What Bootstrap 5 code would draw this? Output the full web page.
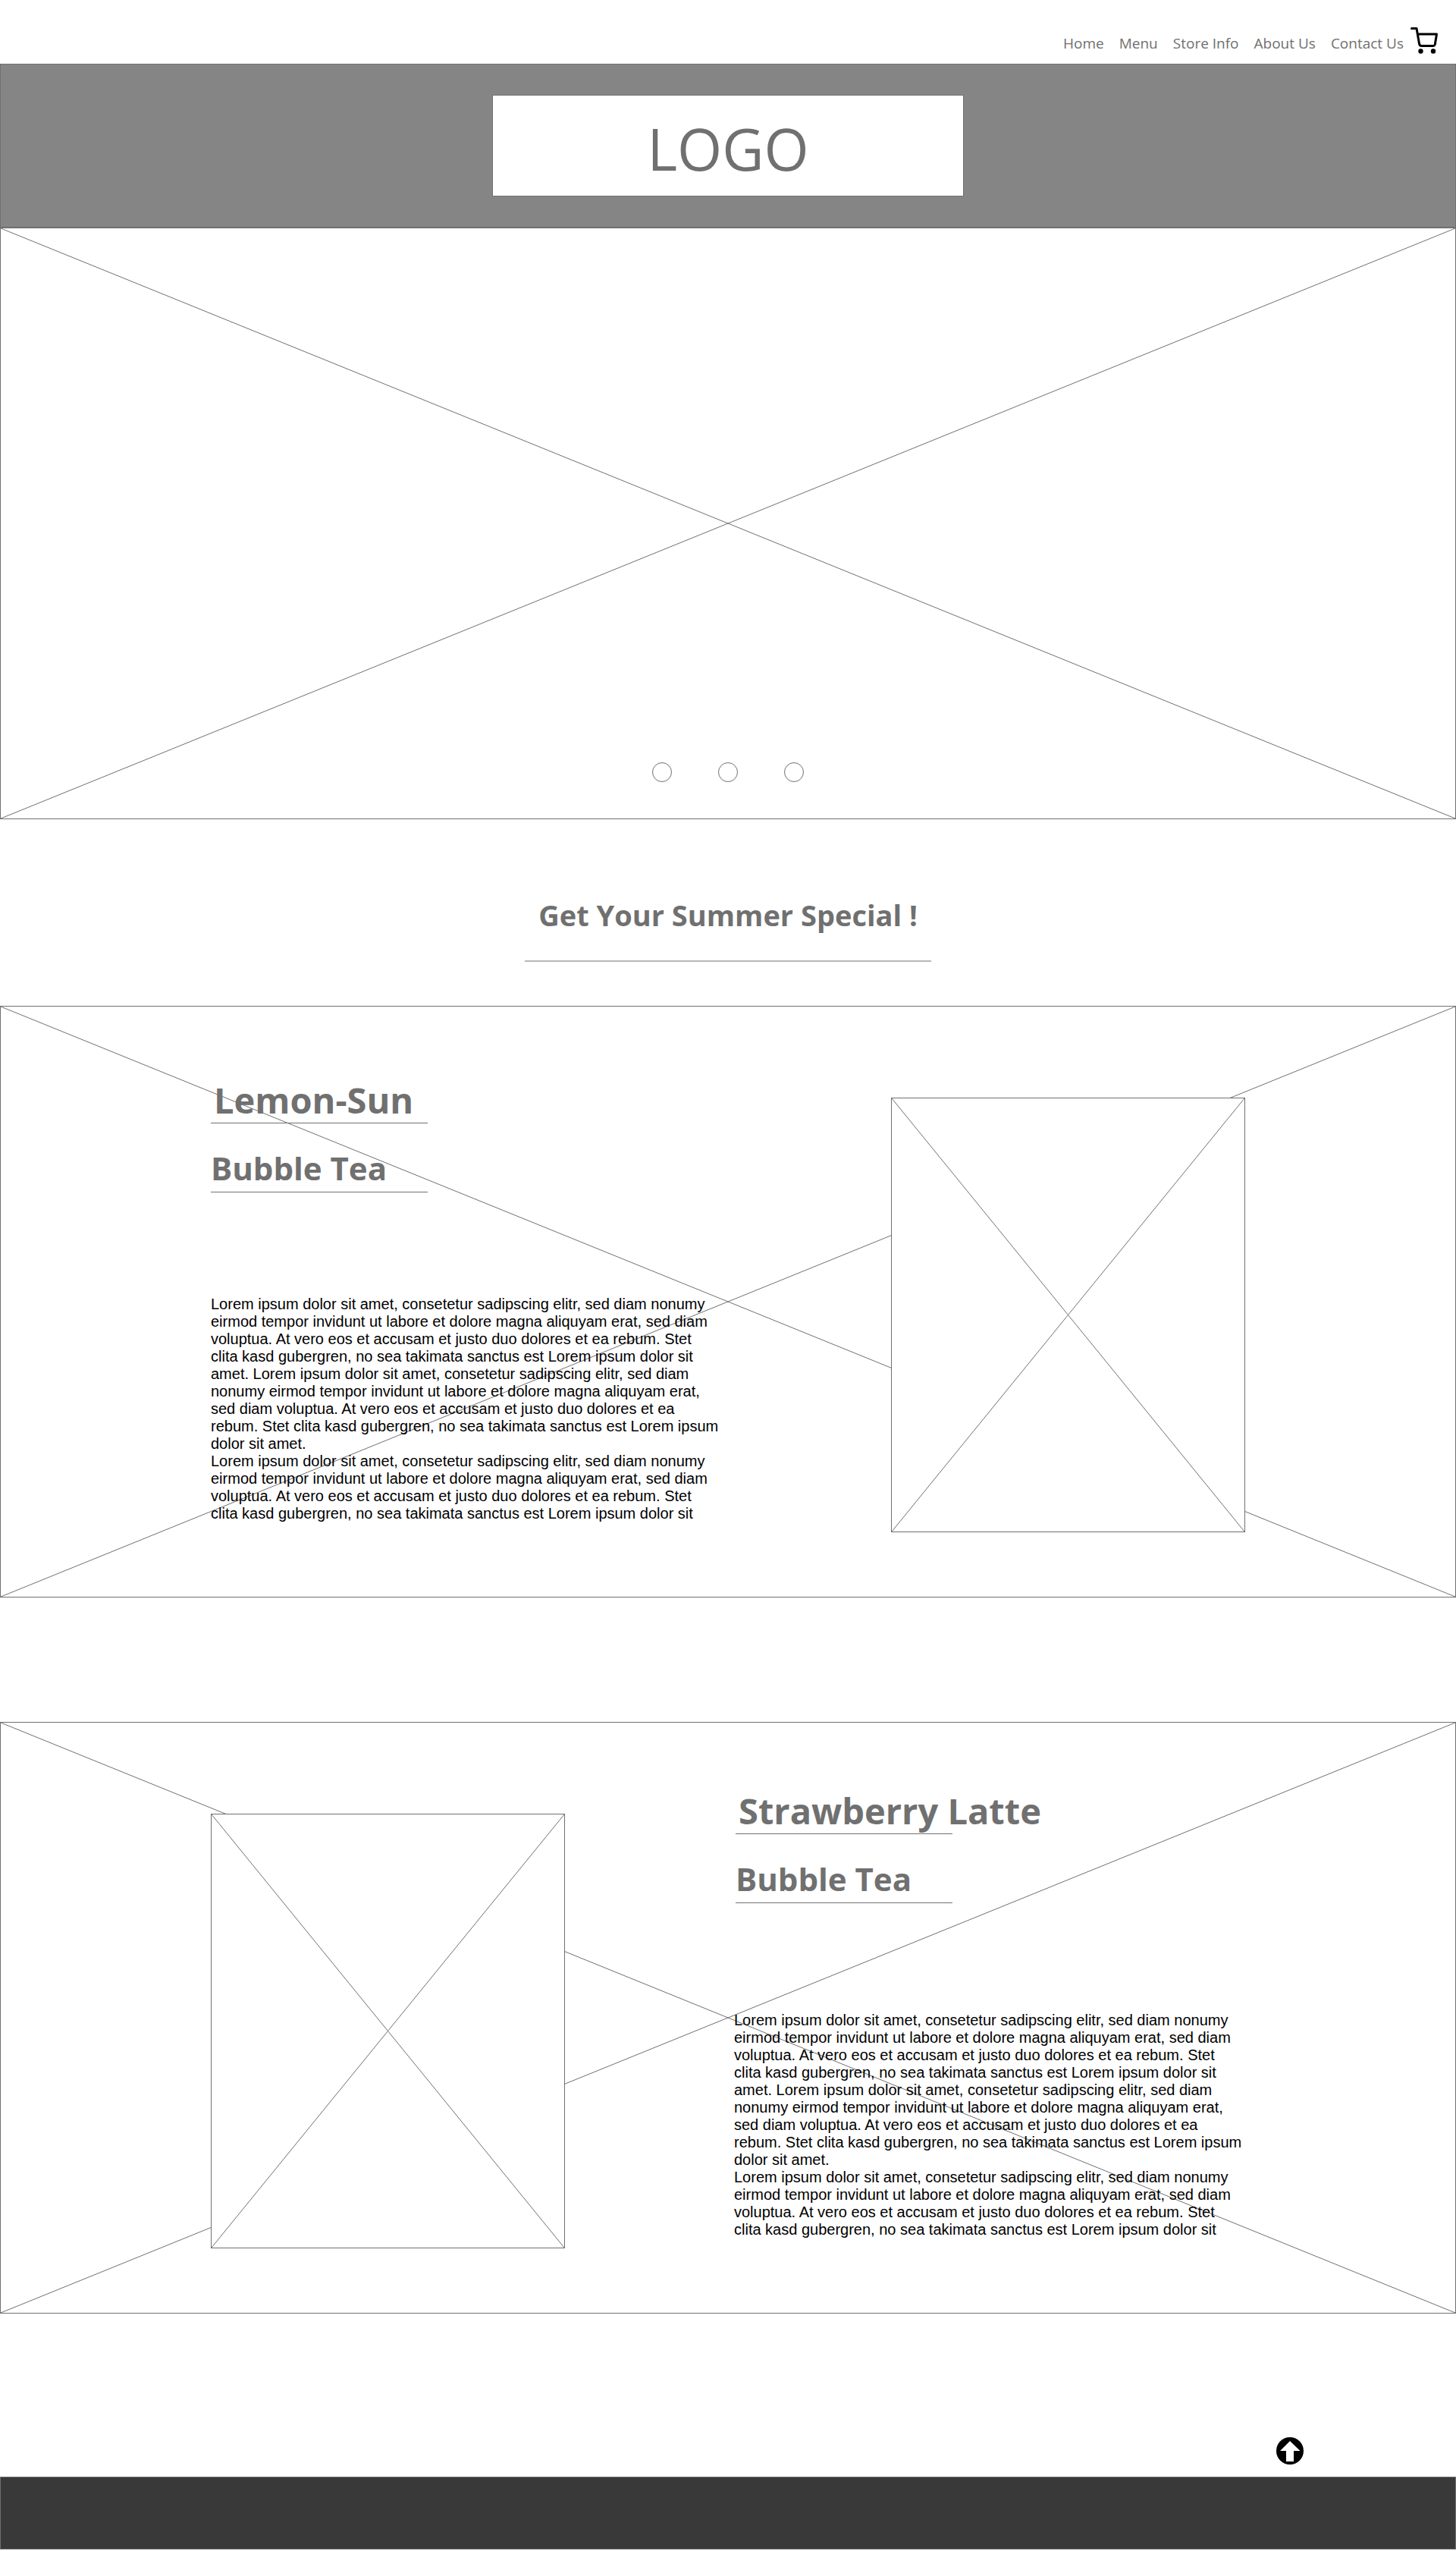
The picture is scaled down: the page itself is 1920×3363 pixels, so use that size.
<!DOCTYPE html>
<html lang="en">
<head>
<meta charset="utf-8">
<meta name="viewport" content="width=device-width, initial-scale=1">
<title>Bubble Tea Shop</title>
<link href="https://cdn.jsdelivr.net/npm/bootstrap@5.3.0/dist/css/bootstrap.min.css" rel="stylesheet">
<style>
  :root { --line: #707070; }
  body { font-family: "Open Sans", "Noto Sans", sans-serif; color: var(--line); background: #fff; }
  .topbar { height: 84px; padding: 20px 23px 0 0; }
  .topbar .nav-link { color: var(--line); font-size: 19px; line-height: 28px; padding: 0; }
  .topbar .navbar-nav { gap: 20px; padding-top: 23px; }
  .cart-link svg, .to-top svg { display: block; }
  .banner { background: #858585; border: 1px solid var(--line); padding: 40px 16px; }
  .logo-box { width: 100%; max-width: 622px; height: 134px; border: 1px solid var(--line); background: #fff; font-size: 76px; line-height: 132px; padding-top: 4px; }
  .placeholder-box { position: relative; border: 1px solid var(--line); background: #fff; }
  .cross { position: absolute; inset: 0; width: 100%; height: 100%; stroke: var(--line); stroke-width: 1; pointer-events: none; }
  .cross line { vector-effect: non-scaling-stroke; }
  .hero { height: 780px; padding-bottom: 48px; }
  .dots { gap: 61px; position: relative; }
  .dot { width: 26px; height: 26px; border: 1px solid var(--line); border-radius: 50%; background: #fff; padding: 0; }
  .special { padding: 100px 16px 58px; }
  .special h1 { font-size: 38px; line-height: 52px; font-weight: 700; margin: 0; padding-bottom: 34px; border-bottom: 2px solid #b7b7b7; width: 536px; max-width: 100%; }
  .feature { padding: 120px 16px 85px; }
  .feature-inner { position: relative; max-width: 1364px; }
  .feature-photo { width: 467px; height: 573px; max-width: 100%; }
  .feature-copy { width: 674px; max-width: 100%; }
  .feature h2, .feature h3 { width: 286px; max-width: 100%; margin: 0; font-weight: 700; border-bottom: 1px solid var(--line); white-space: nowrap; }
  .feature h2 { font-size: 47px; line-height: 64px; height: 63px; margin-top: -29px; padding-left: 4px; }
  .feature h3 { font-size: 42px; line-height: 60px; height: 91px; padding-top: 29px; }
  .feature-text { font-family: "Liberation Sans", Arial, sans-serif; font-size: 20px; line-height: 23px; color: #000; padding-top: 136px; }
  .feature-text p { margin: 0; }
  .feature-gap { height: 164px; }
  .raised h2 { margin-top: -36px; }
  .raised h2, .raised h3 { margin-left: 2px; }
  .raised .feature-text { padding-top: 143px; }
  .page-end { padding: 163px 201px 16px 16px; }
  .site-footer { height: 96px; margin-bottom: 2px; background: #393939; border: 1px solid var(--line); }
</style>
<script src="https://cdn.jsdelivr.net/npm/bootstrap@5.3.0/dist/js/bootstrap.bundle.min.js"></script>
</head>
<body>
<nav class="topbar d-flex justify-content-end align-items-start" aria-label="Main">
  <ul class="navbar-nav flex-row">
    <li><a class="nav-link" href="#">Home</a></li>
    <li><a class="nav-link" href="#">Menu</a></li>
    <li><a class="nav-link" href="#">Store Info</a></li>
    <li><a class="nav-link" href="#">About Us</a></li>
    <li><a class="nav-link" href="#">Contact Us</a></li>
  </ul>
  <a class="cart-link ms-2 pt-3" href="#" aria-label="Cart">
    <svg width="38" height="36" viewBox="0 0 38 36" fill="none" stroke="#000" stroke-width="3" stroke-linecap="round" stroke-linejoin="round"><path d="M2.500 1.500H9L12.500 21.500Q13 24.500 15.500 24.500H30.500Q32.800 24.500 33.300 22.500L35.500 9H10.500"/><circle cx="14.500" cy="31.500" r="3.200" fill="#000" stroke="none"/><circle cx="31" cy="31.500" r="3.200" fill="#000" stroke="none"/></svg>
  </a>
</nav>

<header class="banner d-flex justify-content-center">
  <div class="logo-box d-flex justify-content-center">LOGO</div>
</header>

<main>
  <section class="placeholder-box hero d-flex justify-content-center align-items-end" aria-label="Slideshow">
    <svg class="cross" viewBox="0 0 100 100" preserveAspectRatio="none" aria-hidden="true"><line x1="0" y1="0" x2="100" y2="100"/><line x1="0" y1="100" x2="100" y2="0"/></svg>
    <div class="dots d-flex">
      <button class="dot" type="button" aria-label="Slide 1"></button>
      <button class="dot" type="button" aria-label="Slide 2"></button>
      <button class="dot" type="button" aria-label="Slide 3"></button>
    </div>
  </section>

  <div class="special d-flex justify-content-center">
    <h1 class="text-center text-nowrap">Get Your Summer Special !</h1>
  </div>

  <section class="placeholder-box feature">
    <svg class="cross" viewBox="0 0 100 100" preserveAspectRatio="none" aria-hidden="true"><line x1="0" y1="0" x2="100" y2="100"/><line x1="0" y1="100" x2="100" y2="0"/></svg>
    <div class="feature-inner mx-auto d-flex flex-wrap justify-content-between">
      <div class="feature-copy">
        <h2>Lemon-Sun</h2>
        <h3>Bubble Tea</h3>
        <div class="feature-text">
          <p>Lorem ipsum dolor sit amet, consetetur sadipscing elitr, sed diam nonumy eirmod tempor invidunt ut labore et dolore magna aliquyam erat, sed diam voluptua. At vero eos et accusam et justo duo dolores et ea rebum. Stet clita kasd gubergren, no sea takimata sanctus est Lorem ipsum dolor sit amet. Lorem ipsum dolor sit amet, consetetur sadipscing elitr, sed diam nonumy eirmod tempor invidunt ut labore et dolore magna aliquyam erat, sed diam voluptua. At vero eos et accusam et justo duo dolores et ea rebum. Stet clita kasd gubergren, no sea takimata sanctus est Lorem ipsum dolor sit amet.</p>
          <p>Lorem ipsum dolor sit amet, consetetur sadipscing elitr, sed diam nonumy eirmod tempor invidunt ut labore et dolore magna aliquyam erat, sed diam voluptua. At vero eos et accusam et justo duo dolores et ea rebum. Stet clita kasd gubergren, no sea takimata sanctus est Lorem ipsum dolor sit</p>
        </div>
      </div>
      <div class="placeholder-box feature-photo">
        <svg class="cross" viewBox="0 0 100 100" preserveAspectRatio="none" role="img" aria-label="Lemon-Sun"><line x1="0" y1="0" x2="100" y2="100"/><line x1="0" y1="100" x2="100" y2="0"/></svg>
      </div>
    </div>
  </section>

  <div class="feature-gap"></div>

  <section class="placeholder-box feature raised">
    <svg class="cross" viewBox="0 0 100 100" preserveAspectRatio="none" aria-hidden="true"><line x1="0" y1="0" x2="100" y2="100"/><line x1="0" y1="100" x2="100" y2="0"/></svg>
    <div class="feature-inner mx-auto d-flex flex-wrap justify-content-between">
      <div class="placeholder-box feature-photo">
        <svg class="cross" viewBox="0 0 100 100" preserveAspectRatio="none" role="img" aria-label="Strawberry Latte"><line x1="0" y1="0" x2="100" y2="100"/><line x1="0" y1="100" x2="100" y2="0"/></svg>
      </div>
      <div class="feature-copy">
        <h2>Strawberry Latte</h2>
        <h3>Bubble Tea</h3>
        <div class="feature-text">
          <p>Lorem ipsum dolor sit amet, consetetur sadipscing elitr, sed diam nonumy eirmod tempor invidunt ut labore et dolore magna aliquyam erat, sed diam voluptua. At vero eos et accusam et justo duo dolores et ea rebum. Stet clita kasd gubergren, no sea takimata sanctus est Lorem ipsum dolor sit amet. Lorem ipsum dolor sit amet, consetetur sadipscing elitr, sed diam nonumy eirmod tempor invidunt ut labore et dolore magna aliquyam erat, sed diam voluptua. At vero eos et accusam et justo duo dolores et ea rebum. Stet clita kasd gubergren, no sea takimata sanctus est Lorem ipsum dolor sit amet.</p>
          <p>Lorem ipsum dolor sit amet, consetetur sadipscing elitr, sed diam nonumy eirmod tempor invidunt ut labore et dolore magna aliquyam erat, sed diam voluptua. At vero eos et accusam et justo duo dolores et ea rebum. Stet clita kasd gubergren, no sea takimata sanctus est Lorem ipsum dolor sit</p>
        </div>
      </div>
    </div>
  </section>

  <div class="page-end d-flex justify-content-end">
    <a class="to-top" href="#" aria-label="Back to top">
      <svg width="36" height="36" viewBox="0 0 36 36"><circle cx="18" cy="18" r="18" fill="#000"/><path d="M18 5L31.500 18H23V32H13V18H5Z" fill="#fff"/></svg>
    </a>
  </div>
</main>

<footer class="site-footer"></footer>
</body>
</html>
